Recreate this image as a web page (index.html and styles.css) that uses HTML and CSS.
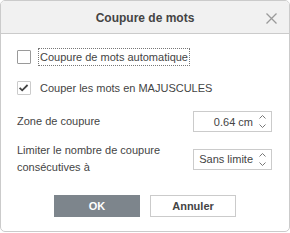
FILE: index.html
```html
<!DOCTYPE html>
<html lang="fr">
<head>
    <meta charset="UTF-8">
    <meta name="viewport" content="width=device-width, initial-scale=1.0">
    <title>Coupure de mots</title>
    <link rel="stylesheet" href="styles.css">
</head>
<body>
    <div class="dialog">
        <header class="dialog-header">
            <span class="dialog-title">Coupure de mots</span>
            <button class="close-btn" aria-label="Fermer">
                <svg width="11" height="11" viewBox="0 0 11 11">
                    <path d="M0.5 0.5 L10.5 10.5 M10.5 0.5 L0.5 10.5" stroke="#9a9a9a" stroke-width="1.3" fill="none"/>
                </svg>
            </button>
        </header>

        <div class="dialog-body">
            <label class="check-row first">
                <span class="check-box"></span>
                <span class="check-label focused">Coupure de mots automatique</span>
            </label>

            <label class="check-row">
                <span class="check-box checked">
                    <svg width="12" height="12" viewBox="0 0 12 12">
                        <path d="M1.6 5.8 L4.2 8.3 L9.6 3" stroke="#444" stroke-width="1.8" fill="none"/>
                    </svg>
                </span>
                <span class="check-label">Couper les mots en MAJUSCULES</span>
            </label>

            <div class="field-row zone">
                <span class="field-label">Zone de coupure</span>
                <div class="spin-input">
                    <span class="spin-value">0.64 cm</span>
                    <svg class="spin-arrows" width="9" height="19" viewBox="0 0 9 19">
                        <path d="M1.5 6.5 L4.5 3.5 L7.5 6.5 M1.5 12.5 L4.5 15.5 L7.5 12.5" stroke="#777" stroke-width="1" fill="none"/>
                    </svg>
                </div>
            </div>

            <div class="field-row limit">
                <span class="field-label">Limiter le nombre de coupure<br>consécutives à</span>
                <div class="spin-input">
                    <span class="spin-value">Sans limite</span>
                    <svg class="spin-arrows" width="9" height="19" viewBox="0 0 9 19">
                        <path d="M1.5 6.5 L4.5 3.5 L7.5 6.5 M1.5 12.5 L4.5 15.5 L7.5 12.5" stroke="#777" stroke-width="1" fill="none"/>
                    </svg>
                </div>
            </div>

            <div class="dialog-footer">
                <button class="btn btn-primary">OK</button>
                <button class="btn">Annuler</button>
            </div>
        </div>
    </div>
</body>
</html>
```

FILE: styles.css
```css
:root {
    --text-color: #444444;
    --border-color: #cbcbcb;
    --header-bg: #f1f1f1;
    --primary-bg: #7d858c;
}

body {
    margin: 0;
    padding: 0;
    background: #ffffff;
    font-family: 'Liberation Sans', Arial, sans-serif;
    font-size: 11px;
    color: var(--text-color);
}

.dialog {
    width: 290px;
    height: 232px;
    box-sizing: border-box;
    border: 1px solid var(--border-color);
    border-radius: 5px;
    overflow: hidden;
    background: #ffffff;
}

.dialog-header {
    position: relative;
    height: 32px;
    background: var(--header-bg);
    border-bottom: 1px solid var(--border-color);
    display: flex;
    align-items: center;
    justify-content: center;
}

.dialog-title {
    font-size: 12px;
    font-weight: bold;
    padding-top: 2px;
}

.close-btn {
    position: absolute;
    right: 12px;
    top: 12px;
    padding: 0;
    border: none;
    background: none;
    width: 11px;
    height: 11px;
    display: flex;
}

.dialog-body {
    padding: 15px 16px 0 16px;
}

.check-row {
    display: flex;
    align-items: center;
    height: 16px;
    margin-top: 15px;
}

.check-row.first {
    margin-top: 0;
}

.check-box {
    width: 12px;
    height: 12px;
    border: 1px solid #9a9a9a;
    border-radius: 1px;
    display: flex;
    align-items: center;
    justify-content: center;
    margin-right: 8px;
    flex-shrink: 0;
}

.check-box.checked {
    border-color: #cbcbcb;
}

.check-label {
    padding: 1px 1px;
    line-height: 14px;
}

.check-label.focused {
    outline: 1px dotted #777;
}

.field-row {
    display: flex;
    align-items: center;
    justify-content: space-between;
}

.field-row.zone {
    margin-top: 15px;
}

.field-row.limit {
    margin-top: 10px;
}

.field-label {
    line-height: 17px;
    flex: 1;
}

.spin-input {
    width: 79px;
    height: 21px;
    box-sizing: border-box;
    border: 1px solid var(--border-color);
    display: flex;
    align-items: center;
    justify-content: flex-end;
    padding-right: 4px;
    margin-right: 1px;
    flex-shrink: 0;
    white-space: nowrap;
}

.spin-value {
    margin-right: 5px;
}

.spin-arrows {
    display: block;
}

.dialog-footer {
    display: flex;
    justify-content: center;
    gap: 10px;
    margin-top: 19px;
}

.btn {
    width: 86px;
    height: 22px;
    box-sizing: border-box;
    border: 1px solid var(--border-color);
    background: #ffffff;
    color: var(--text-color);
    font-family: 'Liberation Sans', Arial, sans-serif;
    font-size: 11px;
    font-weight: bold;
    padding: 0;
}

.btn-primary {
    background: var(--primary-bg);
    border-color: var(--primary-bg);
    color: #ffffff;
}
```
